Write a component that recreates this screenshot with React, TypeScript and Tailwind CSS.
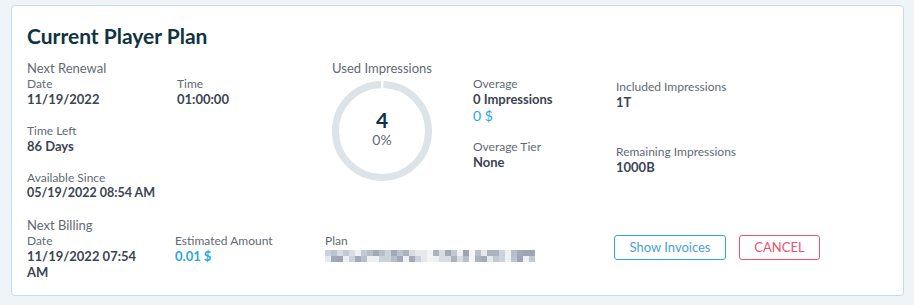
import React from "react";

const font = { fontFamily: "Lato, 'Noto Sans', sans-serif" };

function Label({ children }: { children: React.ReactNode }) {
  return <div className="text-[12px] leading-[15px] text-[#5f6a75]">{children}</div>;
}
function Value({ children, blue }: { children: React.ReactNode; blue?: boolean }) {
  return (
    <div className={`text-[13px] leading-[16px] font-bold ${blue ? "text-[#2aa6e4]" : "text-[#3b4552]"}`}>
      {children}
    </div>
  );
}

function Ring() {
  const r = 46.5;
  const c = 2 * Math.PI * r;
  const gap = 3;
  return (
    <div className="relative w-[100px] h-[100px]">
      <svg width="100" height="100" viewBox="0 0 100 100" className="absolute inset-0">
        <circle
          cx="50"
          cy="50"
          r={r}
          fill="none"
          stroke="#dde3e6"
          strokeWidth="7"
          strokeDasharray={`${c - gap} ${gap}`}
          strokeDashoffset={-gap / 2}
          transform="rotate(-90 50 50)"
        />
      </svg>
      <div className="absolute inset-0 flex flex-col items-center justify-center">
        <div className="text-[21px] leading-[22px] font-bold text-[#0f3341] mt-[-4px]">4</div>
        <div className="text-[14px] leading-[18px] text-[#5f6a75]">0%</div>
      </div>
    </div>
  );
}

function Mosaic() {
  const palette = ["#9ea4b4", "#c3c9d4", "#d9dde3", "#b6c0cb", "#e6e8ec", "#aab3c0", "#ccd2da", "#eef0f2", "#a3a9b8", "#b9c6d2"];
  let seed = 11;
  const rnd = () => {
    seed = (seed * 9301 + 49297) % 233280;
    return seed / 233280;
  };
  const cols = 35;
  const gaps = new Set([17, 24]);
  const rows = [0, 1];
  return (
    <div className="flex flex-col">
      {rows.map((row) => (
        <div key={row} className="flex">
          {Array.from({ length: cols }).map((_, i) => {
            const col = gaps.has(i) ? "#f4f5f7" : palette[Math.floor(rnd() * palette.length)];
            return <span key={i} className="block w-[6px] h-[6px]" style={{ backgroundColor: col }} />;
          })}
        </div>
      ))}
    </div>
  );
}

export default function App() {
  return (
    <div className="w-[914px] h-[305px] bg-[#eef4f8] pt-[5px] pl-[11px]" style={font}>
      <div className="w-[893px] h-[291px] bg-white border border-[#c5dcee] rounded-[4px] pl-[15px] pt-[16px]">
        <div className="text-[21px] leading-[28px] font-bold text-[#0f3341]">Current Player Plan</div>

        <div className="flex mt-[10px]">
          <div className="w-[298px]">
            <div className="text-[13px] leading-[16px] text-[#5f6a75]">Next Renewal</div>
            <div className="grid grid-cols-[150px_1fr]">
              <div>
                <Label>Date</Label>
                <Value>11/19/2022</Value>
              </div>
              <div>
                <Label>Time</Label>
                <Value>01:00:00</Value>
              </div>
            </div>
            <div className="mt-[16px]">
              <Label>Time Left</Label>
              <Value>86 Days</Value>
            </div>
            <div className="mt-[16px]">
              <Label>Available Since</Label>
              <div className="text-[12.5px] leading-[16px] font-bold text-[#3b4552]">05/19/2022 08:54 AM</div>
            </div>
          </div>

          <div className="w-[148px]">
            <div className="w-[114px] flex flex-col items-center">
              <div className="text-[13px] leading-[16px] text-[#5f6a75]">Used Impressions</div>
              <div className="mt-[5px]">
                <Ring />
              </div>
            </div>
          </div>

          <div className="w-[143px] pt-[16px]">
            <Label>Overage</Label>
            <Value>0 Impressions</Value>
            <div className="text-[14px] leading-[17px] text-[#2aa6e4]">0 $</div>
            <div className="mt-[15px]">
              <Label>Overage Tier</Label>
              <Value>None</Value>
            </div>
          </div>

          <div className="pt-[19px]">
            <Label>Included Impressions</Label>
            <Value>1T</Value>
            <div className="mt-[34px]">
              <Label>Remaining Impressions</Label>
              <Value>1000B</Value>
            </div>
          </div>
        </div>

        <div className="flex mt-[16px]">
          <div className="w-[298px]">
            <div className="text-[13px] leading-[16px] text-[#5f6a75]">Next Billing</div>
            <div className="grid grid-cols-[148px_1fr]">
              <div className="w-[130px]">
                <Label>Date</Label>
                <Value>11/19/2022 07:54 AM</Value>
              </div>
              <div>
                <Label>Estimated Amount</Label>
                <Value blue>0.01 $</Value>
              </div>
            </div>
          </div>

          <div className="w-[289px] pt-[16px]">
            <Label>Plan</Label>
            <div className="mt-[2px]">
              <Mosaic />
            </div>
          </div>

          <div className="flex gap-[13px] pt-[18px]">
            <button className="h-[25px] w-[112px] border border-[#2aa6e4] rounded-[3px] text-[13px] text-[#4aa0dc] bg-white">
              Show Invoices
            </button>
            <button className="h-[25px] w-[81px] border border-[#f0506e] rounded-[3px] text-[13px] text-[#f0506e] bg-white">
              CANCEL
            </button>
          </div>
        </div>
      </div>
    </div>
  );
}
